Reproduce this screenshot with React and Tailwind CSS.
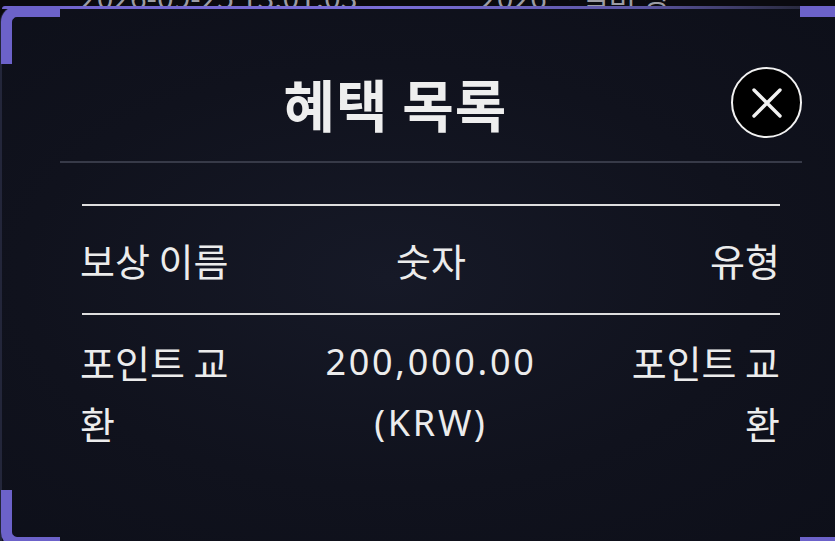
export default function App() {
  const kr = { fontFamily: '"Noto Sans CJK KR", "Noto Sans", sans-serif' };
  const num = { fontFamily: '"Noto Sans", "Noto Sans CJK KR", sans-serif' };
  return (
    <div className="w-[835px] h-[541px] overflow-hidden bg-[#0a0a0f] relative" style={kr}>
      {/* page behind modal */}
      <div className="h-[6px] overflow-hidden">
        <div className="-mt-[19px] flex text-[30px] leading-[30px] text-[#9c9ca4]">
          <span className="ml-[80px] w-[400px]">2026-09-25 13:01:03</span>
          <span>2026스 설비 상</span>
        </div>
      </div>

      {/* modal */}
      <div className="relative w-[860px] h-[542px] rounded-t-[16px] border-l-2 border-[#23263a] bg-[radial-gradient(ellipse_at_45%_50%,#161927_0%,#10121d_55%,#0d0f19_100%)]">
        <div className="h-[3px] rounded-t-[16px] bg-[linear-gradient(90deg,#6f63cc_0%,#7a6ed8_45%,#5b55a0_75%,#2c2d44_92%,#1a1c2a_100%)]"></div>

        {/* corners */}
        <div className="absolute left-[-1px] top-0 w-[59px] h-[58px] border-l-[11px] border-t-[11px] border-[#6c62c9] rounded-tl-[16px]"></div>
        <div className="absolute right-0 top-0 w-[60px] h-[58px] border-r-[11px] border-t-[11px] border-[#6c62c9] rounded-tr-[16px]"></div>
        <div className="absolute left-[-1px] bottom-0 w-[59px] h-[58px] border-l-[11px] border-b-[11px] border-[#6c62c9] rounded-bl-[16px]"></div>
        <div className="absolute right-0 bottom-0 w-[60px] h-[58px] border-r-[11px] border-b-[11px] border-[#6c62c9] rounded-br-[16px]"></div>

        <div className="px-[58px]">
          {/* header */}
          <div className="pt-[58px] flex items-center">
            <div className="flex-1 text-center text-[56px] leading-[71px] font-bold text-[#eeeeee] tracking-[1px]">
              혜택 목록
            </div>
            <button className="w-[71px] h-[71px] rounded-full bg-black border-2 border-[#f2f2f2] flex items-center justify-center">
              <svg width="32" height="32" viewBox="0 0 32 32">
                <path d="M3 3 L29 29 M29 3 L3 29" stroke="#f2f2f2" strokeWidth="3.4" strokeLinecap="round" fill="none" />
              </svg>
            </button>
          </div>
          <div className="mt-[23px] h-[2px] bg-[#373a48]"></div>

          {/* table */}
          <div className="px-[22px] mt-[41px]">
            <div className="h-[2px] bg-[#dedede]"></div>
            <div className="grid grid-cols-3 items-center h-[107px] text-[38px] text-[#ececec]">
              <div className="text-left -ml-[2px]">보상 이름</div>
              <div className="text-center">숫자</div>
              <div className="text-right">유형</div>
            </div>
            <div className="h-[2px] bg-[#dedede]"></div>
            <div className="grid grid-cols-3 pt-[16px] text-[38px] leading-[61px] text-[#ececec]">
              <div className="text-left -ml-[2px]">
                <div>포인트 교</div>
                <div>환</div>
              </div>
              <div className="text-center text-[36px] tracking-[2.7px]" style={num}>
                <div>200,000.00</div>
                <div>(KRW)</div>
              </div>
              <div className="text-right">
                <div>포인트 교</div>
                <div>환</div>
              </div>
            </div>
          </div>
        </div>
      </div>
    </div>
  );
}
